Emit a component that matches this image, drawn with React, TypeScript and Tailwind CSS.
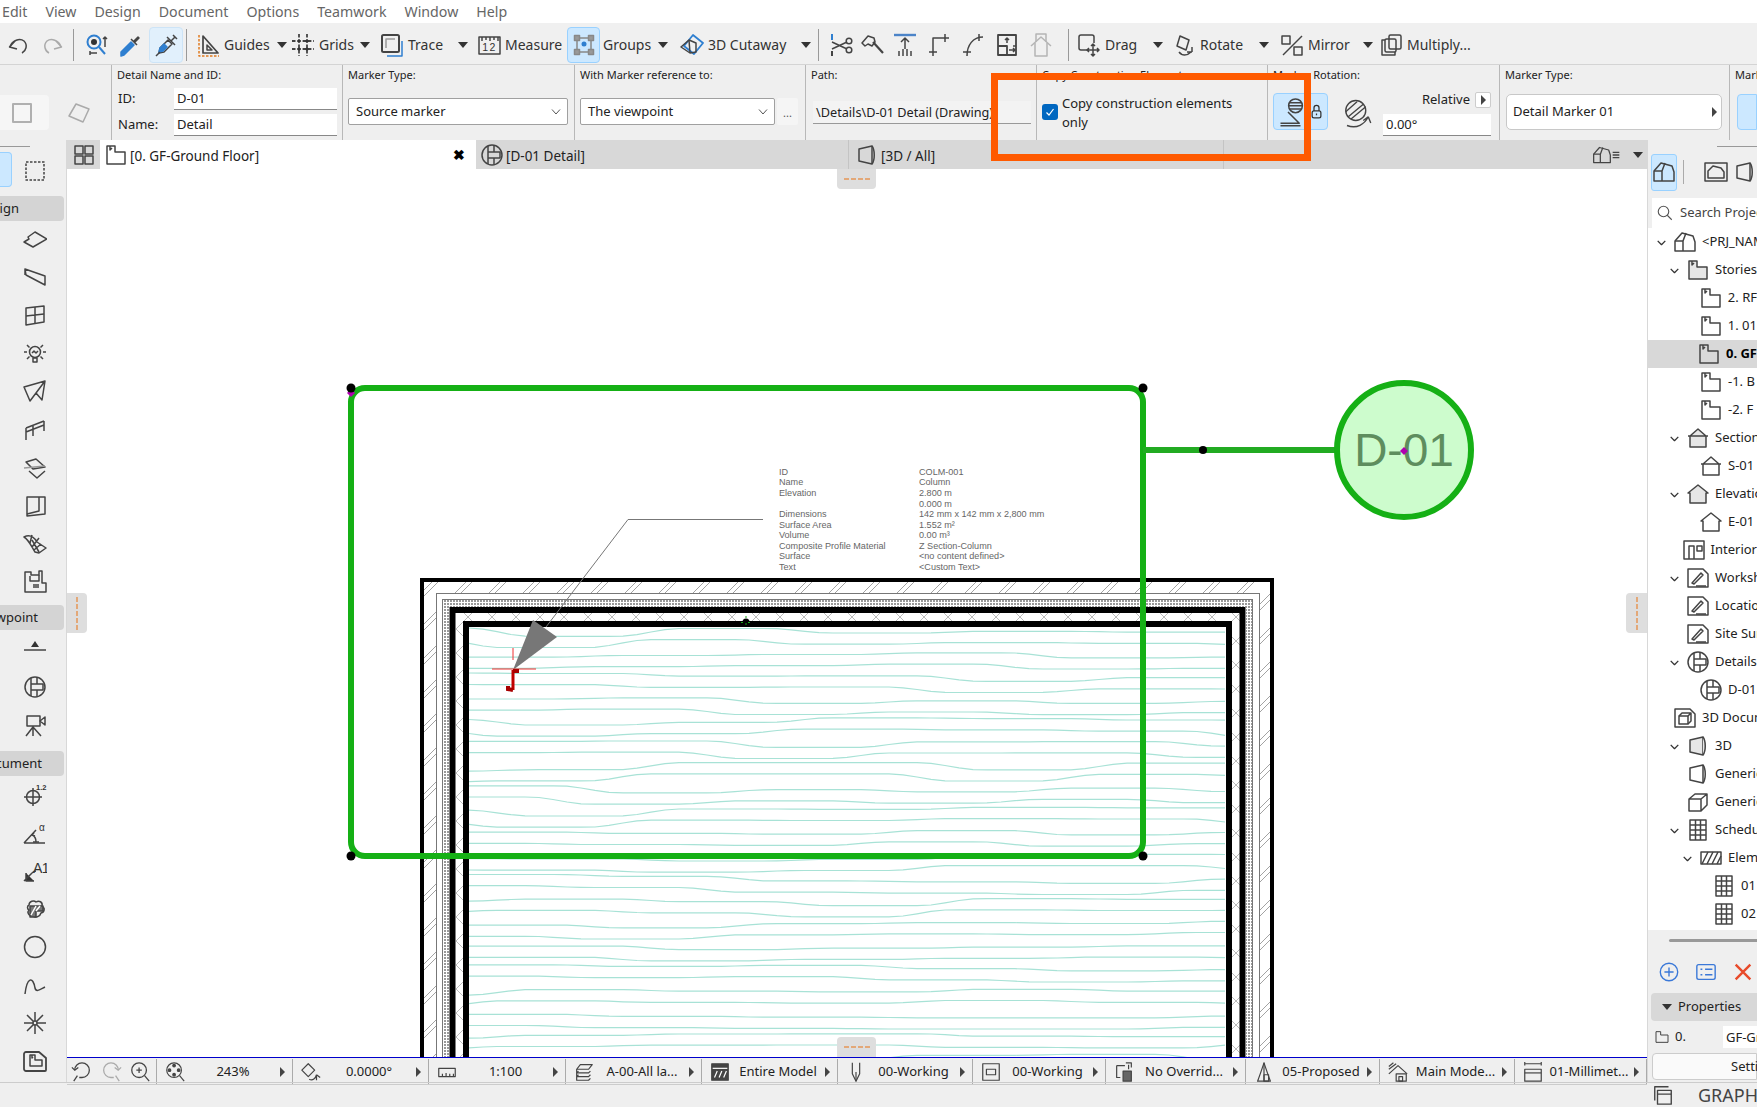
import type { ReactNode } from 'react'

// generic line icon, 24 box
function Ic({ children, size = 24, stroke = '#444', sw = 1.5 }: { children: ReactNode; size?: number; stroke?: string; sw?: number }) {
  return (
    <svg width={size} height={size} viewBox="0 0 24 24" fill="none" stroke={stroke} strokeWidth={sw} strokeLinejoin="round" className="shrink-0 block">
      {children}
    </svg>
  )
}

const TriDown = () => (
  <svg width="10" height="6" viewBox="0 0 10 6" className="shrink-0"><path d="M0 0H10L5 6Z" fill="#333" /></svg>
)
const TriRight = () => (
  <svg width="5" height="10" viewBox="0 0 5 10" className="shrink-0"><path d="M0 0L5 5L0 10Z" fill="#444" /></svg>
)

const svgText = { fontFamily: 'Liberation Sans', stroke: 'none' }

const icons = {
  undo: <><path d="M9 8 3.500 14 11 16" /><path d="M4 14C6 7 14 5 18 8c4 4 2 10-2 12" /></>,
  redo: <><path d="M15 8l5.500 6L13 16" /><path d="M20 14C18 7 10 5 6 8c-4 4-2 10 2 12" /></>,
  find: <><circle cx="10" cy="9" r="6.500" stroke="#2f7fd0" strokeWidth="2" /><circle cx="10" cy="9" r="3" fill="#333" stroke="none" /><path d="M15 14l6 7" stroke="#2f7fd0" strokeWidth="2" /><path d="M21 14V4M19 6l2-2 2 2M6 18v4M6 20h7" /></>,
  dropper: <><path d="M3 19 13 9l3 3L6 22l-3 1Z" fill="#2f7fd0" stroke="#2f7fd0" /><path d="M13 6l6 6M16 8l4-4 1 1-4 4" /></>,
  syringe: <><path d="M6 15l8-8 4 4-8 8-5 1Z" fill="#e1f0fc" /><path d="M5 19l1-4 4-4 3 3-4 4Z" fill="#2f7fd0" stroke="#2f7fd0" /><path d="M2 23l4-4M13 4l8 8M17 8l4-4M19 2l4 4" /></>,
  guides: <><path d="M7 3 22 20H7Z" strokeWidth="1.700" /><path d="M11 12v5h5Z" /><path d="M3 2v21h20" stroke="#e07a1f" strokeDasharray="2.500 1.500" /></>,
  grids: <><path d="M8 1v22M16 1v22M1 8h22M1 16h22" strokeDasharray="3.500 1.800" strokeWidth="1.800" /><g fill="#333" stroke="none"><circle cx="8" cy="8" r="1.500" /><circle cx="16" cy="8" r="1.500" /><circle cx="8" cy="16" r="1.500" /><circle cx="16" cy="16" r="1.500" /></g></>,
  trace: <><path d="M7 23h15V8" stroke="#2f7fd0" /><rect x="2" y="2" width="17" height="17" rx="1.500" strokeWidth="2" /><path d="M6 15V6h9" stroke="#999" /></>,
  measure: <><rect x="2" y="4" width="21" height="17" /><path d="M5 4v4M9 4v3M13 4v4M17 4v3M21 4v4" /><text x="12.500" y="18" textAnchor="middle" fontSize="10.500" letterSpacing="1.500" fill="#333" {...svgText}>12</text></>,
  groups: <><rect x="5" y="5" width="14" height="14" stroke="#888" /><rect x="2.500" y="2.500" width="5" height="5" fill="#999" stroke="#888" /><rect x="16.500" y="2.500" width="5" height="5" fill="#999" stroke="#888" /><rect x="2.500" y="16.500" width="5" height="5" fill="#999" stroke="#888" /><rect x="16.500" y="16.500" width="5" height="5" fill="#999" stroke="#888" /><circle cx="12" cy="11" r="2.500" fill="#2f7fd0" stroke="none" /></>,
  cutaway: <><path d="M13 2 23 10 14 21 4 13Z" stroke="#2f7fd0" strokeWidth="1.800" /><path d="M1 14l8-7 7 3v9l-6 1-9-6Z" /><path d="M9 7l1 13" /></>,
  scissor: <><path d="M3 1v6" stroke="#2f7fd0" strokeWidth="2" /><path d="M3 18v5" strokeWidth="2" /><circle cx="20" cy="8" r="2.800" /><circle cx="20" cy="17" r="2.800" /><path d="M3 9l15 7M3 16l15-7" /></>,
  hammer: <><path d="M1 10 7 3l6 2 1 4-3 4-4-2-3 2Z" /><path d="M12 9l10 11" strokeWidth="2.200" /></>,
  extend: <><path d="M1 2h22" stroke="#4c84c8" strokeWidth="2.400" /><path d="M12 5v11M8 9l4-4 4 4" /><path d="M6 23v-5M10 23v-7M14 23v-7M18 23v-5" /></>,
  fillet: <><path d="M7 23V5h16" /><path d="M3 19h8M19 1v8" /></>,
  arc: <><path d="M6 23C6 12 12 4 22 4" /><path d="M2 19h8M18 1v7" /></>,
  split: <><path d="M3 2h18v20H3ZM3 13h9v9" strokeWidth="1.800" /><path d="M12 10V5M10 7l2-2 2 2M14 17h6M18 15l2 2-2 2M21 13h-3" /></>,
  home: <g stroke="#b4b4b4"><path d="M7 9V1h10v8" /><path d="M2 13 12 4l10 9" /><path d="M6 10v13h12V10" /></g>,
  drag: <><path d="M11 17H4a2 2 0 0 1-2-2V4a2 2 0 0 1 2-2h11a2 2 0 0 1 2 2v6" /><path d="M16 11v12M10 17h12M14 13l2-2 2 2M14 21l2 2 2-2M12 15l-2 2 2 2M20 15l2 2-2 2" /></>,
  rotate: <><path d="M8 3l9 4-3 10-9-4Z" /><path d="M7 19c3 4 8 4 12 0M20 19v-5M20 19l-5 0" /></>,
  mirror: <><rect x="2" y="3" width="8" height="8" /><rect x="14" y="14" width="8" height="8" /><path d="M22 3 3 22" /></>,
  multiply: <><rect x="10" y="2" width="12" height="14" rx="1.500" /><path d="M6 7H3v15h13v-3" /><rect x="6" y="6" width="11" height="13" rx="1.500" /></>,
  square: <rect x="3" y="3" width="18" height="18" stroke="#b0b0b0" strokeWidth="2" />,
  slant: <path d="M9 3 22 8l-6 13L2 15Z" stroke="#aaa" />,
  story: <path d="M3 3h8v6h10v12H3ZM6 3v4l2-2" />,
  tabGrid: <><rect x="3" y="3" width="8" height="8" /><rect x="13" y="3" width="8" height="8" /><rect x="3" y="13" width="8" height="8" /><rect x="13" y="13" width="8" height="8" /></>,
  detail: <><circle cx="12" cy="12" r="10" /><path d="M8 3v18M14 2.500V9M14 15v6.500M8 9h12v6H8Z" /></>,
  view3d: <><path d="M4 6l13-3v18L4 18Z" /><path d="M17 3c3 4 3 14 0 18" /></>,
  box3d: <path d="M3 9l6-5h12v11l-6 6H3ZM3 9h12v12M15 9l6-5" />,
  zoomFit: <><circle cx="11" cy="10" r="8" /><circle cx="11" cy="5" r="1.400" fill="#444" /><circle cx="11" cy="15" r="1.400" fill="#444" /><circle cx="6" cy="10" r="1.400" fill="#444" /><circle cx="16" cy="10" r="1.400" fill="#444" /><path d="M17 16l5 6" /></>,
  zoomBack: <><path d="M4 10a8 8 0 1 1 8 8H9" /><path d="M7 16l-4 6M1 7l3 3 4-3" /></>,
  zoomFwd: <><path d="M20 10a8 8 0 1 0-8 8h3" /><path d="M17 16l4 6M23 7l-3 3-4-3" /></>,
  zoomIn: <><circle cx="11" cy="10" r="8" /><path d="M17 16l5 6M8 10h6M11 7v6" /></>,
  angle: <><path d="M9 3l7 7-7 7-7-7Z" /><path d="M10 20c4 2 7-1 8-5M18 15v6M18 15l4 3" /></>,
  scale: <><rect x="3" y="8" width="18" height="9" /><path d="M7 17v-3M11 17v-4M15 17v-3M19 17v-3" /></>,
  layers: <path d="M4 9l4-5h13l-4 5ZM4 9v4l2-2M4 13h13l2-2M4 13v4l2-2M4 17h13l2-2M4 17v4h13l2-2" />,
  model: <><rect x="3" y="3" width="18" height="18" fill="#444" /><path d="M4 8h16" stroke="#fff" /><path d="M6 18l3-7M11 18l3-7M16 18l3-7" stroke="#fff" /></>,
  pen: <><path d="M8 2v12l4 8 4-8V2" /><path d="M12 12v10" /></>,
  rectIn: <><rect x="3" y="3" width="18" height="18" /><rect x="7" y="9" width="10" height="6" /></>,
  override: <><path d="M4 5h9M4 5v13h4" /><rect x="11" y="11" width="9" height="11" fill="#666" /><path d="M14 2h6v5M17 9V4" /></>,
  proposed: <><path d="M5 22C8 14 10 8 12 2c2 6 4 12 7 20Z" /><path d="M12 2v20" /><rect x="12" y="15" width="5" height="7" /></>,
  mainModel: <><path d="M2 14 12 5l10 9" /><path d="M2 9 10 3M2 6l5-4" /><rect x="10" y="14" width="11" height="8" /><rect x="13" y="17" width="4" height="5" /></>,
  millimetre: <><path d="M3 3h18M3 1v4M21 1v4" /><rect x="3" y="9" width="18" height="13" /><path d="M3 13h18" /></>,
  slab: <path d="M1 14l5-3-1-2 7-5 12 7-14 8Z" />,
  wall: <path d="M2 3l20 7v9L3 9ZM2 3v6M22 10v9" />,
  windowI: <><path d="M3 4 21 2v16L3 21Z" /><path d="M12 3v17M3 12l18-2" /></>,
  lamp: <><circle cx="12" cy="10" r="5.500" /><path d="M10 16h4v4h-4ZM1 10h3M20 10h3M4 3l2.500 2.500M20 3l-2.500 2.500M4 17l2.500-2.500M20 17l-2.500-2.500M9 11l2-2 2 2 2-2" /></>,
  mesh: <path d="M1 5c6-3 10 0 13 5l9 6-7 5-4-1C8 14 6 8 1 5ZM9 3l-2 8M16 6l-7 9M18 12l-7 6M9 8l7 12" />,
  shell: <path d="M1 7 22 1 19 20 13 13 7 21ZM22 1 13 13" />,
  railing: <path d="M3 10 21 3M3 14l18-7M3 10v12M10 8v10M21 3v10" />,
  stair: <><path d="M3 6l10-3 9 8-12 2Z" /><path d="M1 12l21-2" stroke="#999" /><path d="M6 15l8 7 8-7" /></>,
  cwall: <><path d="M4 3h18v17L4 22Z" /><path d="M16 3v14L4 20" /></>,
  zone: <><path d="M2 2h6v3h8V1h3v12h4v9H2Z" /><path d="M7 6v5h9V5M10 15h6M10 17h6" /></>,
  elev: <><path d="M12 4 8 10h8Z" fill="#333" stroke="none" /><path d="M1 13h22" /></>,
  camera: <><rect x="4" y="3" width="13" height="10" /><path d="M17 8l5-4v8Z" /><path d="M10 13v10M10 14l-7 9M10 14l8 9" /></>,
  coord: <><circle cx="10" cy="14" r="6.500" /><path d="M1 14h18M10 5v18" /><text x="13" y="7" fontSize="7.500" fontWeight="bold" fill="#333" {...svgText}>1.2</text></>,
  angleDim: <><path d="M1 22h21M1 22 13 9" /><path d="M9 14c3 1 4 4 4 7M11 12l-2 2 3 1M10 21h6" /><text x="16" y="10" fontSize="10" fill="#333" {...svgText}>α</text></>,
  label: <><path d="M1 22l8-8M3 14v8h8" fill="#333" /><path d="M9 14c1-1 2-2 4-2" /><text x="10" y="14" fontSize="14" letterSpacing="-0.500" fill="#333" {...svgText}>A1</text></>,
  fill: <><path d="M6 8c0-4 5-5 7-3 3-2 7 0 6 4 3 2 3 6-1 7-1 4-6 5-8 3-5 0-6-4-4-6-2-1-2-4 0-5Z" /><path d="M7 9h13v5h-7v6H7Z" fill="#777" /><path d="M8 18l5-9M13 14l4-5" stroke="#fff" /></>,
  circle: <circle cx="12" cy="12" r="10.500" />,
  spline: <path d="M2 21C4 4 10 3 12 15c1 5 6 1 10-1" />,
  star: <><path d="M12 1v22M1 12h22M4 4l16 16M20 4 4 20" /><circle cx="12" cy="12" r="2" fill="#efefef" /></>,
  drawing: <><path d="M3 3h13l7 6v12a1 1 0 0 1-1 1H3a2 2 0 0 1-2-2V5a2 2 0 0 1 2-2Z" strokeWidth="1.800" /><path d="M7 6h5v5h7v6H7Z" /><path d="M9 6v3l1-1" /></>,
  marquee: <rect x="3" y="3" width="18" height="18" strokeDasharray="2.500 1.500" />,
  chev: <path d="M5 9l7 7 7-7" />,
  house: <><path d="M2 21V11l7-8 11 3 2 6v9Z" /><path d="M2 11h8l3-8M10 11v10" /></>,
  sectionH: <><path d="M4 10 12 3l8 7M2 10h20M4 10v11h16V10" /></>,
  elevH: <path d="M2 11 12 3l10 8h-2v10H4V11Z" />,
  interior: <><rect x="2" y="3" width="20" height="18" /><path d="M7 21V8h5v13M15 8h5v5h-5Z" /></>,
  sheet: <><path d="M2 3h15l5 5v13H2Z" /><path d="M6 17 15 7l2 2-9 9ZM10 20h10" /></>,
  doc3d: <><path d="M2 3h15l5 5v13H2Z" /><rect x="6" y="10" width="9" height="8" /><path d="M6 10l3-3h9v8l-3 3M15 10l3-3" /></>,
  sched: <><rect x="4" y="2" width="16" height="20" /><path d="M9.500 2v20M14.500 2v20M4 7h16M4 12h16M4 17h16" /></>,
  hatch: <><rect x="2" y="6" width="20" height="12" /><path d="M3 18 9 6M8 18l6-12M13 18l6-12M18 18l4-8" /></>,
}
type IconName = keyof typeof icons

const Icon = ({ n, size, stroke, sw }: { n: IconName; size?: number; stroke?: string; sw?: number }) => (
  <Ic size={size} stroke={stroke} sw={sw}>{icons[n]}</Ic>
)

function Tool({ n, label, w, arrow = true }: { n: IconName; label: string; w: string; arrow?: boolean }) {
  return (
    <div className={`flex items-center h-full ${w}`}>
      <Icon n={n} />
      <span className="ml-[4px] whitespace-nowrap">{label}</span>
      {arrow && <span className="ml-auto mr-[1px]"><TriDown /></span>}
    </div>
  )
}

const Sep = () => (
  <div className="w-[6px] h-full flex items-center justify-center shrink-0"><div className="w-px h-[32px] bg-[#999]" /></div>
)

function IconCell({ n, w, stroke }: { n: IconName; w: string; stroke?: string }) {
  return <div className={`flex items-center justify-center h-full shrink-0 ${w}`}><Icon n={n} stroke={stroke} /></div>
}

function Toolbar() {
  return (
    <div className="h-[42px] flex items-center text-[14px] text-[#333] border-b border-[#d4d4d4] bg-[#f0f0f0] whitespace-nowrap pt-[4px] pb-[2px] box-border">
      <IconCell n="undo" w="w-[35px]" />
      <IconCell n="redo" w="w-[35px]" stroke="#aaa" />
      <Sep />
      <IconCell n="find" w="w-[40px]" />
      <IconCell n="dropper" w="w-[28px]" />
      <div className="ml-[5px] w-[34px] h-[36px] bg-[#e1f0fc] border border-[#cde4f7] rounded-sm flex items-center justify-center"><Icon n="syringe" /></div>
      <Sep />
      <div className="ml-[7px]"><Tool n="guides" label="Guides" w="w-[92px]" /></div>
      <div className="ml-[3px]"><Tool n="grids" label="Grids" w="w-[80px]" /></div>
      <div className="ml-[9px]"><Tool n="trace" label="Trace" w="w-[89px]" /></div>
      <div className="ml-[8px]"><Tool n="measure" label="Measure" w="w-[88px]" arrow={false} /></div>
      <div className="ml-[2px] w-[33px] h-[36px] bg-[#cce8ff] border border-[#99d1ff] rounded-sm flex items-center justify-center"><Icon n="groups" /></div>
      <div className="ml-[3px] flex items-center w-[66px] h-full"><span>Groups</span><span className="ml-auto mr-[1px]"><TriDown /></span></div>
      <div className="ml-[11px]"><Tool n="cutaway" label="3D Cutaway" w="w-[132px]" /></div>
      <div className="ml-[3px] h-full"><Sep /></div>
      <div className="ml-[4px] flex h-full items-center">
        <IconCell n="scissor" w="w-[32px]" />
        <IconCell n="hammer" w="w-[32px]" />
        <IconCell n="extend" w="w-[32px]" />
        <IconCell n="fillet" w="w-[34px]" />
        <IconCell n="arc" w="w-[36px]" />
        <IconCell n="split" w="w-[32px]" />
        <IconCell n="home" w="w-[36px]" />
      </div>
      <div className="ml-[6px] h-full"><Sep /></div>
      <div className="ml-[6px]"><Tool n="drag" label="Drag" w="w-[87px]" /></div>
      <div className="ml-[8px]"><Tool n="rotate" label="Rotate" w="w-[98px]" /></div>
      <div className="ml-[10px]"><Tool n="mirror" label="Mirror" w="w-[94px]" /></div>
      <div className="ml-[5px]"><Tool n="multiply" label="Multiply..." w="w-[100px]" arrow={false} /></div>
    </div>
  )
}

const Label = ({ children }: { children: ReactNode }) => (
  <div className="h-[23px] pt-[3px] pl-[5px] text-[11px] leading-[14px] text-[#222] whitespace-nowrap">{children}</div>
)

function Select({ label, className }: { label: string; className: string }) {
  return (
    <div className={`h-[27px] bg-white border border-[#a0a0a0] rounded-[2px] flex items-center pl-[7px] pr-[6px] pt-[1px] text-[13px] ${className}`}>
      <span>{label}</span>
      <svg className="ml-auto" width="10" height="6" viewBox="0 0 10 6" fill="none" stroke="#555"><path d="M1 0.500 5 5 9 0.500" /></svg>
    </div>
  )
}

function InfoBox() {
  return (
    <div className="h-[75px] flex bg-[#efefef] text-[#222] whitespace-nowrap">
      <div className="w-[112px] shrink-0 border-r border-[#b8b8b8] flex items-center">
        <div className="w-[49px] h-[35px] mt-[20px] bg-[#f6f6f6] rounded-r flex items-center pl-[10px]"><Icon n="square" /></div>
        <div className="ml-[18px] mt-[20px]"><Icon n="slant" /></div>
      </div>
      <div className="w-[231px] shrink-0 border-r border-[#b8b8b8]">
        <Label>Detail Name and ID:</Label>
        <div className="flex items-center h-[22px] mb-[4px] pl-[6px] text-[13px]">
          <span className="w-[56px]">ID:</span>
          <div className="w-[163px] h-full bg-white border-b border-[#888] pl-[3px] leading-[21px]">D-01</div>
        </div>
        <div className="flex items-center h-[22px] pl-[6px] text-[13px]">
          <span className="w-[56px]">Name:</span>
          <div className="w-[163px] h-full bg-white border-b border-[#888] pl-[3px] leading-[21px]">Detail</div>
        </div>
      </div>
      <div className="w-[232px] shrink-0 border-r border-[#b8b8b8]">
        <Label>Marker Type:</Label>
        <Select label="Source marker" className="ml-[5px] mt-[10px] w-[220px]" />
      </div>
      <div className="w-[231px] shrink-0 border-r border-[#b8b8b8]">
        <Label>With Marker reference to:</Label>
        <div className="flex mt-[10px] ml-[5px]">
          <Select label="The viewpoint" className="w-[195px]" />
          <div className="ml-[2px] w-[21px] h-[27px] bg-[#f5f5f5] rounded-[2px] text-[11px] text-[#555] text-center leading-[30px]">...</div>
        </div>
      </div>
      <div className="w-[231px] shrink-0 border-r border-[#b8b8b8]">
        <Label>Path:</Label>
        <div className="ml-[7px] mt-[13px] w-[218px] h-[23px] bg-[#f3f3f3] border-b border-[#999] pl-[3px] text-[12.700px] leading-[22px] overflow-hidden">\Details\D-01 Detail (Drawing)</div>
      </div>
      <div className="w-[231px] shrink-0 border-r border-[#b8b8b8]">
        <Label>Copy Construction Elements:</Label>
        <div className="flex pl-[5px] mt-[4px]">
          <div className="mt-[12px] w-[16px] h-[16px] bg-[#0067c0] rounded-[3px] flex items-center justify-center">
            <svg width="10" height="10" viewBox="0 0 10 10" fill="none" stroke="#fff" strokeWidth="1.200"><path d="M1.500 5.500 4 8l4.500-6" /></svg>
          </div>
          <div className="ml-[4px] text-[13px] leading-[19px] mt-[2px]">Copy construction elements<br />only</div>
        </div>
      </div>
      <div className="w-[232px] shrink-0 border-r border-[#b8b8b8]">
        <Label>Marker Rotation:</Label>
        <div className="flex pl-[5px]">
          <div className="mt-[5px] w-[55px] h-[37px] bg-[#cce8ff] border border-[#99d1ff] rounded-sm flex items-center justify-center gap-[1px]">
            <Ic size={30} sw={1.2}><circle cx="14" cy="7" r="5.500" /><path d="M9 4.500h10M8.500 7h11M9 9.500h10M2 21h15L8 12M2 23h16" /></Ic>
            <Ic size={15} stroke="#333" sw={2}><rect x="5" y="11" width="14" height="11" rx="3" /><path d="M8 11V6a4 4 0 0 1 8 0v5M12 15v3" /></Ic>
          </div>
          <div className="ml-[14px] mt-[10px]">
            <Ic size={30} sw={1.1}><circle cx="11" cy="10" r="8" /><path d="M5 15 17 5M7 17l12-10M3 11l9-8" /><path d="M4 22c8 3 14-1 17-7M21 15l2 5M21 15l-4 3" /></Ic>
          </div>
          <div className="ml-[11px] w-[108px]">
            <div className="h-[16px] mt-[4px] flex items-center justify-end text-[13px]">
              <span>Relative</span>
              <div className="ml-[5px] w-[16px] h-[16px] bg-white border border-[#ccc] rounded-[2px] flex items-center justify-center"><TriRight /></div>
            </div>
            <div className="mt-[6px] h-[22px] bg-white border-b border-[#888] pl-[3px] text-[13px] leading-[21px]">0.00°</div>
          </div>
        </div>
      </div>
      <div className="w-[230px] shrink-0 border-r border-[#b8b8b8]">
        <Label>Marker Type:</Label>
        <div className="ml-[6px] mt-[6px] w-[216px] h-[36px] bg-white border border-[#c8c8c8] rounded-[5px] flex items-center pl-[6px] pr-[4px] text-[13px]">
          <span>Detail Marker 01</span><span className="ml-auto"><TriRight /></span>
        </div>
      </div>
      <div className="flex-1 min-w-0 overflow-hidden">
        <Label>Marker</Label>
        <div className="ml-[7px] mt-[6px] h-[36px] bg-[#cce8ff] border border-[#99d1ff] rounded-l-[4px]" />
      </div>
    </div>
  )
}

function Head({ children, w }: { children: string; w: string }) {
  return (
    <div className="h-[25px] w-[64px] bg-[#d4d4d4] rounded-r-[4px] flex items-center text-[13px] text-[#222]">
      <div className={`flex justify-end whitespace-nowrap ${w}`}>{children}</div>
    </div>
  )
}

const ToolRows = ({ list }: { list: IconName[] }) => (
  <>
    {list.map((n, i) => (
      <div key={i} className="h-[38px] pl-[23px] flex items-center"><Icon n={n} /></div>
    ))}
  </>
)

function ToolBox() {
  return (
    <div className="w-[67px] shrink-0 border-r border-[#d8d8d8] bg-[#efefef]">
      <div className="mt-[6px] w-[30px] h-px bg-[#999]" />
      <div className="mt-[5px] flex h-[35px] items-center">
        <div className="w-[12px] h-full bg-[#cce8ff] border border-[#99d1ff] border-l-0 rounded-r-sm" />
        <div className="ml-[11px] mt-[2px]"><Icon n="marquee" /></div>
      </div>
      <div className="mt-[9px]"><Head w="w-[19px]">Design</Head></div>
      <ToolRows list={['slab', 'wall', 'windowI', 'lamp', 'shell', 'railing', 'stair', 'cwall', 'mesh', 'zone']} />
      <div className="mt-[4px]"><Head w="w-[38px]">Viewpoint</Head></div>
      <ToolRows list={['elev', 'detail', 'camera']} />
      <div className="mt-[7px]"><Head w="w-[42px]">Document</Head></div>
      <ToolRows list={['coord', 'angleDim', 'label', 'fill', 'circle', 'spline', 'star', 'drawing']} />
    </div>
  )
}

function Tabs() {
  return (
    <div className="h-[29px] flex bg-[#d8d8d8] text-[13.500px] text-[#222] whitespace-nowrap">
      <div className="w-[33px] flex items-center justify-center"><Icon n="tabGrid" /></div>
      <div className="w-[376px] bg-white flex items-center pl-[4px]">
        <Icon n="story" />
        <span className="ml-[2px] mt-[3px]">[0. GF-Ground Floor]</span>
        <span className="ml-auto mr-[11px] font-bold text-[14px] text-black">✖</span>
      </div>
      <div className="w-[373px] border-r border-[#c4c4c4] flex items-center pl-[4px]">
        <Icon n="detail" /><span className="ml-[2px] mt-[3px]">[D-01 Detail]</span>
      </div>
      <div className="w-[375px] border-r border-[#c4c4c4] flex items-center pl-[6px]">
        <Icon n="view3d" /><span className="ml-[2px] mt-[3px]">[3D / All]</span>
      </div>
      <div className="flex-1 flex items-center justify-end pr-[4px]">
        <Icon n="house" size={20} /><Ic size={8}><path d="M2 4h20M2 12h20M2 20h20" strokeWidth="4" /></Ic>
        <span className="ml-[13px]"><TriDown /></span>
      </div>
    </div>
  )
}

// the wood fill of the column, wavy horizontal lines with a flat run and a step every so often
const rnd = (a: number, b: number) => {
  const v = Math.sin(a * 12.9898 + b * 78.233) * 43758.5453
  return v - Math.floor(v)
}
const woodLines = Array.from({ length: 39 }, (_, i) => {
  const base = 632 + i * 11.2
  let d = ''
  for (let x = 469; x <= 1229; x += 14) {
    const k = (x - 469) / 150 + (i % 4) * 0.2
    const k0 = Math.floor(k)
    const t = Math.min(1, (k - k0) * 2.5)
    const s = t * t * (3 - 2 * t)
    const band = Math.floor(i / 2)
    const h = rnd(k0, band) + (rnd(k0 + 1, band) - rnd(k0, band)) * s
    d += `${d ? 'L' : 'M'}${x} ${(base + h * 9 - 4).toFixed(1)}`
  }
  return d
})

const infoRows = [
  ['ID', 'COLM-001', 472],
  ['Name', 'Column', 482],
  ['Elevation', '2.800 m', 493],
  ['', '0.000 m', 504],
  ['Dimensions', '142 mm x 142 mm x 2,800 mm', 514],
  ['Surface Area', '1.552 m²', 525],
  ['Volume', '0.00 m³', 535],
  ['Composite Profile Material', 'Z Section-Column', 546],
  ['Surface', '<no content defined>', 556],
  ['Text', '<Custom Text>', 567],
] as const

function Drawing() {
  return (
    <svg viewBox="67 169 1579 888" className="block w-[1579px] h-[888px]">
      <defs>
        <pattern id="hatch" width="34" height="34" patternUnits="userSpaceOnUse">
          <path d="M0 34 34 0M-6 6 6-6M28 40 40 28M-6 34 28 0M28 34 34 28M-6 0-2-4" stroke="#999" strokeWidth="0.900" fill="none" />
        </pattern>
        <pattern id="cross" width="24" height="24" patternUnits="userSpaceOnUse" patternTransform="translate(0 605)">
          <path d="M0 0 24 24M24 0 0 24" stroke="#aaa" strokeWidth="0.800" fill="none" />
        </pattern>
        <pattern id="dots" width="3" height="3" patternUnits="userSpaceOnUse">
          <rect width="3" height="3" fill="#fff" />
          <rect width="2" height="2" fill="#999" />
        </pattern>
      </defs>

      {/* wall layers, bottom edge is cut by the window */}
      <path fillRule="evenodd" d="M422 580H1272V1100H422ZM436 593H1260V1100H436Z" fill="url(#hatch)" />
      <path fillRule="evenodd" d="M443 600H1252V1100H443ZM449 607H1246V1100H449Z" fill="url(#dots)" />
      <path fillRule="evenodd" d="M456 613H1240V1100H456ZM469 627H1226V1100H469Z" fill="url(#cross)" />
      <rect x="422" y="580" width="850" height="600" fill="none" stroke="#000" strokeWidth="4" />
      <rect x="436.500" y="593.500" width="823" height="600" fill="none" stroke="#777" />
      <rect x="442.500" y="599.500" width="810" height="600" fill="none" stroke="#777" />
      <rect x="452.500" y="610" width="790" height="600" fill="none" stroke="#000" strokeWidth="6" />
      <rect x="466" y="624" width="763" height="600" fill="none" stroke="#000" strokeWidth="6" />
      {woodLines.map((d, i) => <path key={i} d={d} fill="none" stroke="#a8e2d6" strokeWidth="1.200" />)}

      {/* label and pointer */}
      <path d="M763 519.500H628L546 627" fill="none" stroke="#777" />
      <path d="M533 620 557 637 513 670Z" fill="#777" />
      <g fontFamily="Liberation Sans" fontSize="9.100" fill="#666">
        {infoRows.map(([a, b, y]) => (
          <g key={y}>
            <text x="779" y={y + 2.500}>{a}</text>
            <text x="919" y={y + 2.500}>{b}</text>
          </g>
        ))}
      </g>

      {/* column */}
      <path d="M492 669H536M513 648V660" stroke="#f03030" fill="none" />
      <path d="M513 670V690" stroke="#c00000" strokeWidth="3" fill="none" />
      <path d="M508 686v3l5 1M513 671h6" stroke="#a80000" strokeWidth="4" fill="none" />
      <circle cx="746" cy="622" r="3.500" fill="#000" />
      <path d="M746 616V629M741 622.500H751" stroke="#14a014" strokeDasharray="2 5" />

      {/* detail boundary */}
      <rect x="351" y="388" width="792" height="468" rx="14" fill="none" stroke="#15b015" strokeWidth="6" />
      <path d="M1143 450H1340" stroke="#22ab22" strokeWidth="6" />
      <circle cx="1404" cy="450" r="67" fill="#cdfccd" stroke="#15b015" strokeWidth="6" />
      <text x="1404" y="466" textAnchor="middle" fontFamily="Liberation Sans" fontSize="46" fill="#5e8d5e">D-01</text>
      <path d="M1404 447 1408 451 1404 455 1400 451Z" fill="#b000b0" />
      <path d="M351 389 355 393 351 397 347 393Z" fill="#b000b0" />
      <g fill="#000">
        <circle cx="351" cy="388" r="4.500" />
        <circle cx="1143" cy="388" r="4.500" />
        <circle cx="351" cy="856" r="4.500" />
        <circle cx="1143" cy="856" r="4.500" />
        <circle cx="1203" cy="450" r="4" />
      </g>
    </svg>
  )
}

const Dash = ({ className }: { className: string }) => <div className={`bg-[#e3a878] ${className}`} />

function Canvas() {
  return (
    <div className="relative h-[889px] bg-white border-b border-[#0000cc] overflow-hidden">
      <Drawing />
      <div className="absolute left-[770px] top-0 w-[39px] h-[20px] bg-[#dedede] rounded-b flex items-center justify-center gap-[2px]">
        {[0, 1, 2, 3].map(i => <Dash key={i} className="w-[5px] h-[2px]" />)}
      </div>
      <div className="absolute left-[770px] bottom-0 w-[39px] h-[20px] bg-[#dedede] rounded-t flex items-center justify-center gap-[2px]">
        {[0, 1, 2, 3].map(i => <Dash key={i} className="w-[5px] h-[2px]" />)}
      </div>
      <div className="absolute left-0 top-[424px] w-[20px] h-[40px] bg-[#dedede] rounded-r flex flex-col items-center justify-center gap-[2px]">
        {[0, 1, 2, 3, 4].map(i => <Dash key={i} className="w-[2px] h-[5px]" />)}
      </div>
      <div className="absolute right-0 top-[424px] w-[21px] h-[40px] bg-[#dedede] rounded-l flex flex-col items-center justify-center gap-[2px]">
        {[0, 1, 2, 3, 4].map(i => <Dash key={i} className="w-[2px] h-[5px]" />)}
      </div>
    </div>
  )
}

function Seg({ n, text, w }: { n: IconName; text: string; w: string }) {
  return (
    <div className={`flex items-center h-full border-r border-[#aaa] pl-[7px] pr-[7px] ${w}`}>
      <Icon n={n} size={22} sw={1.3} />
      <span className="flex-1 text-center whitespace-nowrap">{text}</span>
      <TriRight />
    </div>
  )
}

function StatusBar() {
  return (
    <div className="h-[25px] flex text-[13px] text-[#222] border-b border-[#ccc] box-content pt-[1px]">
      <div className="w-[90px] flex items-center border-r border-[#aaa] pl-[4px] gap-[7px]">
        <Icon n="zoomBack" size={22} sw={1.4} />
        <Icon n="zoomFwd" size={22} sw={1.4} stroke="#aaa" />
        <Icon n="zoomIn" size={22} sw={1.4} />
      </div>
      <Seg n="zoomFit" text="243%" w="w-[136px]" />
      <Seg n="angle" text="0.0000°" w="w-[136px]" />
      <Seg n="scale" text="1:100" w="w-[137px]" />
      <Seg n="layers" text="A-00-All la..." w="w-[136px]" />
      <Seg n="model" text="Entire Model" w="w-[136px]" />
      <Seg n="pen" text="00-Working" w="w-[135px]" />
      <Seg n="rectIn" text="00-Working" w="w-[133px]" />
      <Seg n="override" text="No Overrid..." w="w-[140px]" />
      <Seg n="proposed" text="05-Proposed" w="w-[134px]" />
      <Seg n="mainModel" text="Main Mode..." w="w-[135px]" />
      <Seg n="millimetre" text="01-Millimet..." w="w-[132px]" />
    </div>
  )
}

type Row = { lvl: 0 | 1 | 2 | 3; icon: IconName; text: string; open?: boolean; sel?: boolean; fill?: boolean }

const treeRows: Row[] = [
  { lvl: 0, icon: 'house', text: '<PRJ_NAME>', open: true },
  { lvl: 1, icon: 'story', text: 'Stories', open: true, fill: true },
  { lvl: 2, icon: 'story', text: '2. RF' },
  { lvl: 2, icon: 'story', text: '1. 01' },
  { lvl: 2, icon: 'story', text: '0. GF', sel: true },
  { lvl: 2, icon: 'story', text: '-1. B' },
  { lvl: 2, icon: 'story', text: '-2. F' },
  { lvl: 1, icon: 'sectionH', text: 'Sections', open: true, fill: true },
  { lvl: 2, icon: 'sectionH', text: 'S-01' },
  { lvl: 1, icon: 'elevH', text: 'Elevations', open: true, fill: true },
  { lvl: 2, icon: 'elevH', text: 'E-01' },
  { lvl: 1, icon: 'interior', text: 'Interior' },
  { lvl: 1, icon: 'sheet', text: 'Worksheets', open: true },
  { lvl: 2, icon: 'sheet', text: 'Location' },
  { lvl: 2, icon: 'sheet', text: 'Site Survey' },
  { lvl: 1, icon: 'detail', text: 'Details', open: true },
  { lvl: 2, icon: 'detail', text: 'D-01' },
  { lvl: 1, icon: 'doc3d', text: '3D Documents' },
  { lvl: 1, icon: 'view3d', text: '3D', open: true, fill: true },
  { lvl: 2, icon: 'view3d', text: 'Generic' },
  { lvl: 2, icon: 'box3d', text: 'Generic' },
  { lvl: 1, icon: 'sched', text: 'Schedules', open: true },
  { lvl: 2, icon: 'hatch', text: 'Element', open: true },
  { lvl: 3, icon: 'sched', text: '01' },
  { lvl: 3, icon: 'sched', text: '02' },
]

const lvlPad = ['pl-[7px]', 'pl-[20px]', 'pl-[33px]', 'pl-[46px]']

function TreeRow({ r }: { r: Row }) {
  return (
    <div className={`h-[28px] flex items-center whitespace-nowrap ${lvlPad[r.lvl]} ${r.sel ? 'bg-[#d8d8d8] font-bold text-black' : ''}`}>
      <div className="w-[13px] flex justify-center">
        {r.open && <Ic size={13} stroke="#333" sw={2.4}>{icons.chev}</Ic>}
      </div>
      <div className="ml-[5px]">
        {r.fill ? (
          <svg width="24" height="24" viewBox="0 0 24 24" className="block" fill="#e6e6e6" stroke="#444" strokeWidth="1.500" strokeLinejoin="round">{icons[r.icon]}</svg>
        ) : <Icon n={r.icon} />}
      </div>
      <span className="ml-[5px]">{r.text}</span>
    </div>
  )
}

function RightPanel() {
  return (
    <div className="w-[110px] shrink-0 bg-[#efefef] text-[13px] text-[#222] overflow-hidden border-l border-[#d8d8d8] box-border">
      <div className="h-[58px] relative flex items-center pl-[3px]">
        <div className="absolute left-[69px] top-[6px] w-[41px] h-px bg-[#999]" />
        <div className="mt-[6px] w-[37px] h-[37px] bg-[#cce8ff] border border-[#99d1ff] rounded-[3px] flex items-center justify-center"><Icon n="house" /></div>
        <div className="ml-[6px] mt-[6px] w-px h-[24px] bg-[#aaa]" />
        <div className="ml-[20px] mt-[6px]"><Ic size={24}><rect x="1" y="3" width="22" height="18" /><path d="M4 18v-7l5-5 8 2 3 4v6Z" /></Ic></div>
        <div className="ml-[5px] mt-[6px]"><Icon n="view3d" /></div>
      </div>
      <div className="h-[30px] ml-[4px] bg-white flex items-center pl-[4px] whitespace-nowrap">
        <Ic size={18} stroke="#555"><circle cx="10" cy="10" r="7" /><path d="M15 15l6 6" /></Ic>
        <span className="ml-[6px] text-[#444]">Search Project</span>
      </div>
      <div className="h-[702px] bg-white overflow-hidden">
        {treeRows.map((r, i) => <TreeRow key={i} r={r} />)}
      </div>
      <div className="h-[20px] flex items-center pl-[21px]"><div className="w-full h-[3px] bg-[#999] rounded-l" /></div>
      <div className="h-[43px] flex items-center pl-[10px] gap-[15px]">
        <Ic size={22} stroke="#3a78d8"><circle cx="12" cy="12" r="9.500" /><path d="M12 7v10M7 12h10" /></Ic>
        <Ic size={22} stroke="#3a78d8"><rect x="2" y="4" width="20" height="16" rx="2" /><path d="M6 9h2M11 9h8M6 15h2M11 15h8" /></Ic>
        <Ic size={22} stroke="#e84a2a" sw={2.6}><path d="M4 4l16 16M20 4 4 20" /></Ic>
      </div>
      <div className="h-[28px] ml-[3px] bg-[#d8d8d8] rounded-l flex items-center pl-[11px]">
        <TriDown /><span className="ml-[6px]">Properties</span>
      </div>
      <div className="h-[32px] flex items-center pl-[6px]">
        <Ic size={16}><path d="M3 4h7v5h11v11H3Z" /></Ic>
        <span className="ml-[5px]">0.</span>
        <div className="ml-[37px] flex-1 h-[22px] bg-white pl-[3px] leading-[22px] whitespace-nowrap">GF-Ground</div>
      </div>
      <div className="h-[27px] ml-[4px] bg-[#fafafa] border border-[#ccc] rounded-l-[4px] flex items-center pl-[78px] whitespace-nowrap">Settings</div>
    </div>
  )
}

export default function App() {
  return (
    <div className="relative w-[1757px] h-[1107px] overflow-hidden bg-[#efefef] flex flex-col font-['Noto_Sans',sans-serif]">
      <div className="h-[23px] bg-white flex items-center text-[14.200px] text-[#666] pl-[2px] pt-[1px] gap-[18px] whitespace-nowrap">
        {['Edit', 'View', 'Design', 'Document', 'Options', 'Teamwork', 'Window', 'Help'].map(m => <span key={m}>{m}</span>)}
      </div>
      <Toolbar />
      <InfoBox />
      <div className="h-[942px] flex">
        <ToolBox />
        <div className="w-[1580px] shrink-0">
          <Tabs />
          <Canvas />
          <StatusBar />
        </div>
        <RightPanel />
      </div>
      <div className="h-[25px] flex items-center pl-[1652px] border-t border-[#ccc] whitespace-nowrap">
        <Ic size={22}><rect x="6" y="7" width="15" height="15" /><path d="M3 18V3h15M6 11h15" /></Ic>
        <div className="ml-[5px] w-px h-full bg-[#ccc]" />
        <span className="ml-[19px] text-[18px] text-[#444]">GRAPHISOFT</span>
      </div>
      {/* annotation from the screenshot author */}
      <div className="absolute left-[991px] top-[73px] w-[320px] h-[88px] border-[7px] border-[#ff5a00]" />
    </div>
  )
}
